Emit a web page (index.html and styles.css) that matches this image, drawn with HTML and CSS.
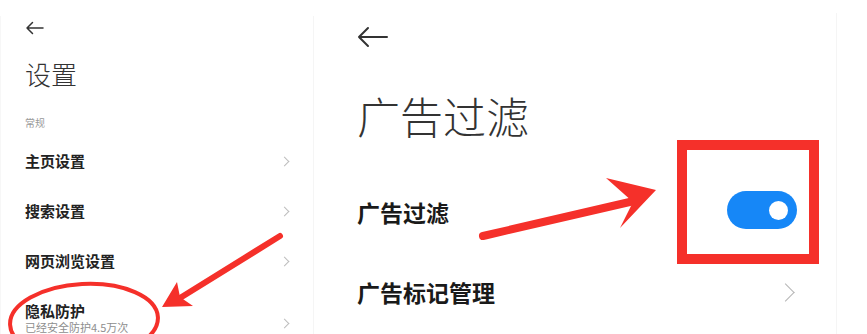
FILE: index.html
```html
<!DOCTYPE html>
<html lang="zh-CN">
<head>
<meta charset="utf-8">
<title>广告过滤</title>
<link rel="stylesheet" href="styles.css">
</head>
<body>
<div class="page">
  <section class="panel panel-left">
    <div class="back back-sm">
      <svg width="19" height="14" viewBox="0 0 19 14"><path d="M18 7H2M7.5 1.5L2 7l5.5 5.5" fill="none" stroke="#333" stroke-width="1.5" stroke-linecap="round" stroke-linejoin="round"/></svg>
    </div>
    <h1 class="title-sm">设置</h1>
    <div class="section-label">常规</div>
    <div class="row-sm"><span class="row-text">主页设置</span><span class="chev-sm"></span></div>
    <div class="row-sm"><span class="row-text">搜索设置</span><span class="chev-sm"></span></div>
    <div class="row-sm"><span class="row-text">网页浏览设置</span><span class="chev-sm"></span></div>
    <div class="row-sm row-two">
      <div class="row-stack">
        <span class="row-text">隐私防护</span>
        <span class="row-sub">已经安全防护4.5万次</span>
      </div>
      <span class="chev-sm"></span>
    </div>
  </section>
  <section class="panel panel-right">
    <div class="back back-lg">
      <svg width="32" height="22" viewBox="0 0 32 22"><path d="M30 11H2M11 2L2 11l9 9" fill="none" stroke="#333" stroke-width="2" stroke-linecap="round" stroke-linejoin="round"/></svg>
    </div>
    <h1 class="title-lg">广告过滤</h1>
    <div class="row-lg row-first"><span class="row-text-lg">广告过滤</span><span class="toggle"><span class="knob"></span></span></div>
    <div class="row-lg"><span class="row-text-lg">广告标记管理</span><span class="chev-lg"></span></div>
  </section>
  <div class="highlight-box"></div>
  <svg class="annot" width="867" height="334" viewBox="0 0 867 334">
    <ellipse cx="84" cy="321" rx="74" ry="37" fill="none" stroke="#f5302a" stroke-width="4" transform="rotate(-3 84 321)"/>
    <line x1="280" y1="236" x2="180" y2="298" stroke="#f5302a" stroke-width="6" stroke-linecap="round"/>
    <polygon points="162,307 177,282 180,297 193,306" fill="#f5302a"/>
    <line x1="483" y1="236" x2="634" y2="201" stroke="#f5302a" stroke-width="8" stroke-linecap="round"/>
    <polygon points="656,190 606,178 633,202 620,228" fill="#f5302a"/>
  </svg>
</div>
</body>
</html>
```

FILE: styles.css
```css
* { box-sizing: border-box; margin: 0; padding: 0; }
html, body { background: #fff; }
body {
  font-family: "Noto Sans CJK SC", "Noto Sans", sans-serif;
  color: #1f1f1f;
}
.page {
  position: relative;
  width: 867px;
  height: 334px;
  overflow: hidden;
  display: flex;
  align-items: flex-start;
}
.panel { height: 400px; }
.panel-left {
  width: 314px;
  margin-top: 16px;
  padding: 0 23px 0 24px;
  border-left: 1px solid #f7f7f7;
  border-right: 1px solid #f5f5f5;
}
.back { display: flex; align-items: center; }
.back-sm { height: 24px; }
.title-sm {
  margin-top: 17px;
  font-size: 26px;
  line-height: 34px;
  font-weight: 300;
  color: #333;
}
.section-label {
  margin-top: 25px;
  font-size: 10px;
  line-height: 14px;
  color: #999;
}
.row-sm {
  height: 50px;
  display: flex;
  align-items: center;
  justify-content: space-between;
}
.section-label + .row-sm { margin-top: 6px; }
.row-text {
  font-size: 15px;
  line-height: 20px;
  font-weight: 700;
  color: #222;
}
.row-two { align-items: flex-start; padding-top: 15px; }
.row-two .chev-sm { margin-top: 19px; }
.row-stack { display: flex; flex-direction: column; }
.row-sub {
  font-size: 11px;
  line-height: 13px;
  color: #8e8e8e;
}
.chev-sm {
  width: 7px;
  height: 7px;
  border-top: 1.3px solid #bdbdbd;
  border-right: 1.3px solid #bdbdbd;
  transform: rotate(45deg);
  margin-right: 2px;
}
.panel-right {
  width: 523px;
  margin-top: 13px;
  padding: 0 39px 0 43px;
  border-right: 1px solid #f5f5f5;
}
.back-lg { height: 28px; margin-top: 10px; }
.title-lg {
  margin-top: 39px;
  font-size: 43px;
  line-height: 50px;
  font-weight: 300;
  color: #333;
}
.row-lg {
  height: 80px;
  display: flex;
  align-items: center;
  justify-content: space-between;
}
.row-first { margin-top: 32px; }
.row-text-lg {
  font-size: 23px;
  line-height: 30px;
  font-weight: 700;
  color: #1a1a1a;
}
.toggle {
  width: 70px;
  height: 38px;
  border-radius: 19px;
  background: #1687f7;
  display: flex;
  align-items: center;
  justify-content: flex-end;
  padding-right: 9px;
  margin-top: -4px;
}
.knob {
  width: 19px;
  height: 19px;
  border-radius: 50%;
  background: #fff;
}
.chev-lg {
  width: 13px;
  height: 13px;
  border-top: 1.5px solid #b5b5b5;
  border-right: 1.5px solid #b5b5b5;
  transform: rotate(45deg);
  margin-right: 5px;
}
.highlight-box {
  position: absolute;
  left: 677px;
  top: 140px;
  width: 142px;
  height: 124px;
  border: 10px solid #f5302a;
}
.annot { position: absolute; left: 0; top: 0; }
```
